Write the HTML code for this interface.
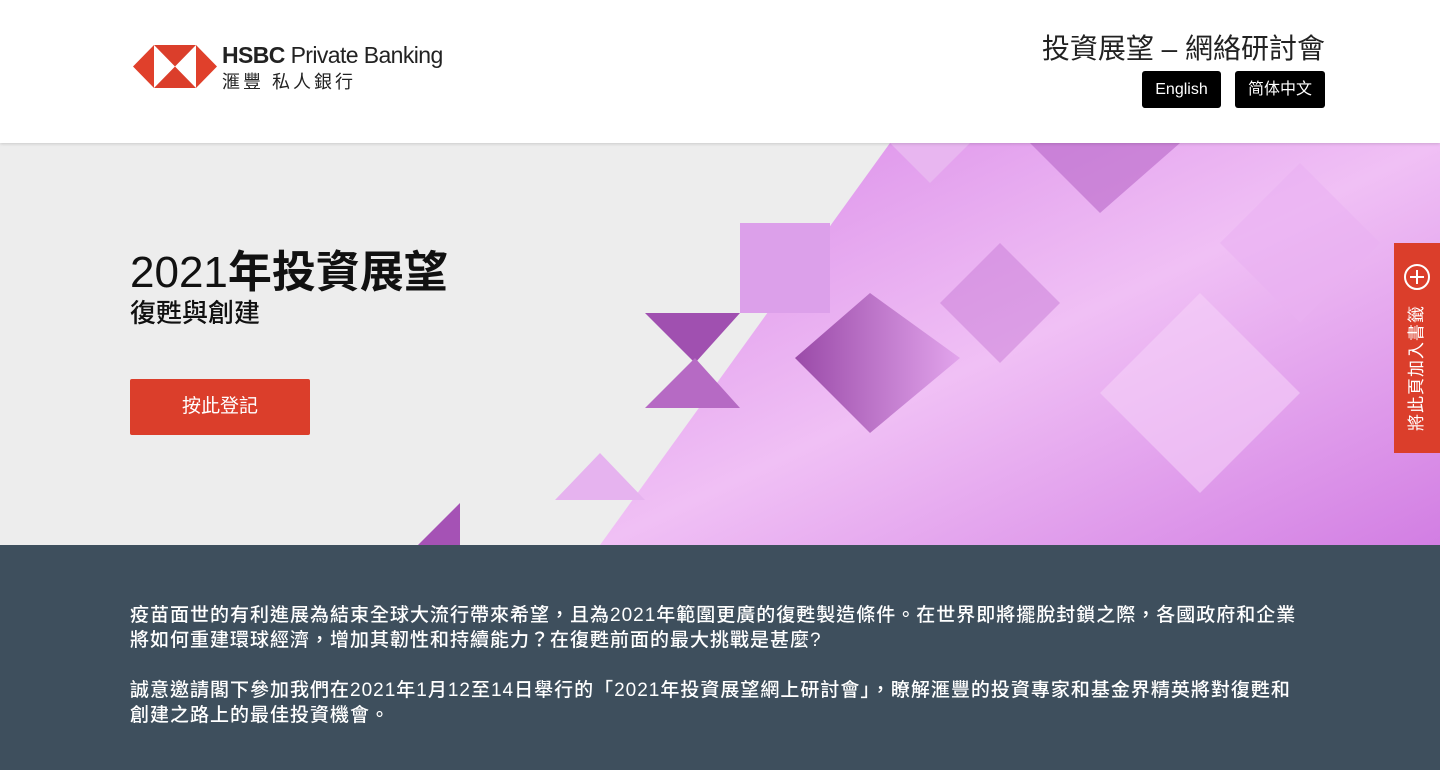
<!DOCTYPE html>
<html><head><meta charset="utf-8"><style>
*{margin:0;padding:0;box-sizing:border-box}
body{width:1440px;height:770px;overflow:hidden;font-family:"Liberation Sans","Noto Sans CJK TC",sans-serif;background:#fff}
header{height:143px;position:relative;background:#fff;box-shadow:0 1px 3px rgba(0,0,0,.15);z-index:2}
.hero{position:absolute;top:143px;left:0;width:1440px;height:402px;background:#ededed;overflow:hidden}
.bottom{position:absolute;top:545px;left:0;width:1440px;height:225px;background:#3e4f5d;color:#fff;padding:58px 130px 0;font-size:19px;line-height:25px;font-weight:500;white-space:nowrap;letter-spacing:1px}
.btn{position:absolute;background:#000;color:#fff;font-size:16px;height:37px;line-height:37px;text-align:center;border-radius:3px;top:71px}
</style></head><body>
<header>
<svg style="position:absolute;left:133px;top:45px" width="84" height="43" viewBox="0 0 84 43">
<rect x="21" y="0" width="42" height="43" fill="#fff"/>
<polygon points="21,0 63,0 42,21.5" fill="#db3e2b"/>
<polygon points="21,43 63,43 42,21.5" fill="#db3e2b"/>
<polygon points="0,21.5 21,0 21,43" fill="#e0402b"/>
<polygon points="84,21.5 63,0 63,43" fill="#e0402b"/>
</svg>
<div style="position:absolute;left:222px;top:42px;font-size:23px;color:#222;letter-spacing:-.6px"><b>HSBC</b> Private Banking</div>
<div style="position:absolute;left:222px;top:68px;font-size:18px;color:#222;letter-spacing:3px">滙豐 私人銀行</div>
<div style="position:absolute;right:115px;top:27px;font-size:28px;color:#222">投資展望 – 網絡研討會</div>
<div class="btn" style="left:1142px;width:79px">English</div>
<div class="btn" style="left:1235px;width:90px">简体中文</div>
</header>
<div class="hero">
<svg width="1440" height="402" style="position:absolute;left:0;top:0">
<defs>
<linearGradient id="g" x1="0" y1="0" x2="1" y2="1"><stop offset="0" stop-color="#d989e8"/><stop offset=".5" stop-color="#f0c0f5"/><stop offset="1" stop-color="#d27ee3"/></linearGradient>
<linearGradient id="d" x1="0" y1="0" x2="1" y2="0"><stop offset="0" stop-color="#9a4aa8"/><stop offset="1" stop-color="#e2a4ec"/></linearGradient>
</defs>
<polygon points="600,402 890,0 1440,0 1440,402" fill="url(#g)"/>
<polygon points="890,0 970,0 930,40" fill="#e8b6f0"/>
<polygon points="1030,0 1180,0 1100,70" fill="#b868c8" opacity=".6"/>
<polygon points="740,80 830,80 830,170 740,170" fill="#dca0ea"/>
<polygon points="645,170 740,170 695,220" fill="#a050b0"/>
<polygon points="645,265 740,265 695,215" fill="#b66ac4"/>
<polygon points="795,215 870,150 960,215 870,290" fill="url(#d)"/>
<polygon points="555,357 600,310 645,357" fill="#e6b3ef"/>
<polygon points="418,402 460,360 460,402" fill="#a552b5"/>
<polygon points="1200,150 1300,250 1200,350 1100,250" fill="#f5d0f8" opacity=".6"/>
<polygon points="1000,100 1060,160 1000,220 940,160" fill="#c77bd6" opacity=".5"/>
<polygon points="1300,20 1380,100 1300,180 1220,100" fill="#e9b0f2" opacity=".6"/>
</svg>
<div style="position:absolute;left:130px;top:93px;font-size:44px;color:#111;font-weight:300">2021<b style="font-weight:700">年投資展望</b></div>
<div style="position:absolute;left:130px;top:150px;font-size:26px;color:#111;font-weight:500">復甦與創建</div>
<div style="position:absolute;left:130px;top:236px;width:180px;height:56px;background:#db3e2b;color:#fff;font-size:19px;line-height:56px;text-align:center;border-radius:2px">按此登記</div>
<div style="position:absolute;left:1394px;top:100px;width:46px;height:210px;background:#db3e2b;color:#fff;overflow:hidden">
<svg style="position:absolute;left:9px;top:20px" width="28" height="28" viewBox="0 0 28 28"><circle cx="14" cy="14" r="12" fill="none" stroke="#fff" stroke-width="2"/><path d="M14 7v14M7 14h14" stroke="#fff" stroke-width="2"/></svg>
<div style="position:absolute;left:-42px;top:114px;width:130px;height:22px;line-height:22px;text-align:center;transform:rotate(-90deg);font-size:17px;letter-spacing:1px;white-space:nowrap">將此頁加入書籤</div>
</div>
</div>
<div class="bottom">
<p>疫苗面世的有利進展為結束全球大流行帶來希望，且為2021年範圍更廣的復甦製造條件。在世界即將擺脫封鎖之際，各國政府和企業<br>將如何重建環球經濟，增加其韌性和持續能力？在復甦前面的最大挑戰是甚麼?</p>
<p style="margin-top:25px">誠意邀請閣下參加我們在2021年1月12至14日舉行的「2021年投資展望網上研討會」，瞭解滙豐的投資專家和基金界精英將對復甦和<br>創建之路上的最佳投資機會。</p>
</div>
</body></html>
